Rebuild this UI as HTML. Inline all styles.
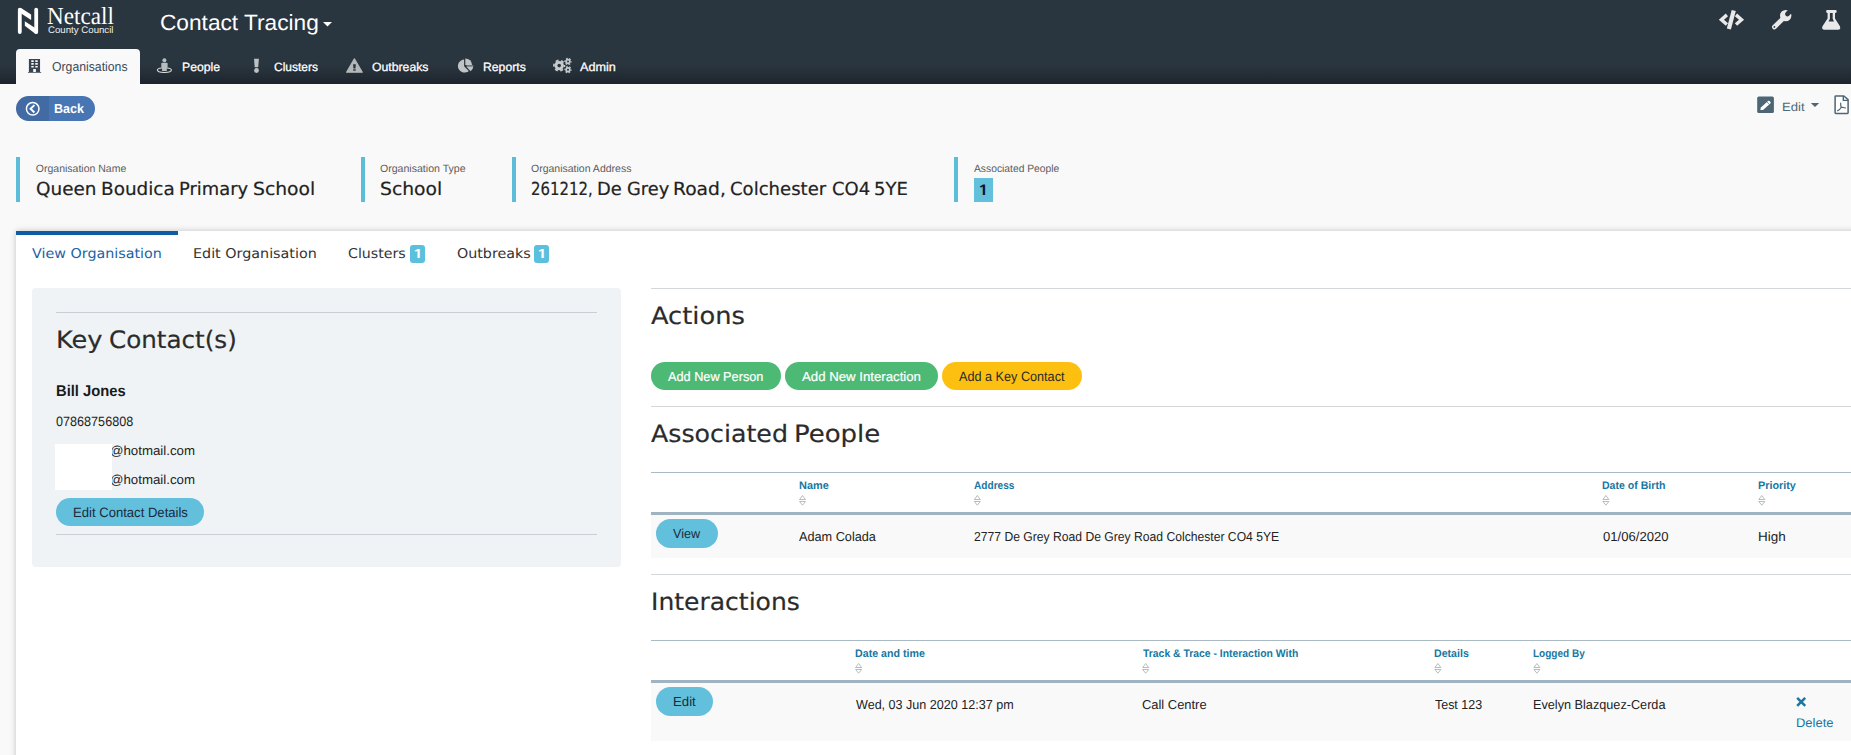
<!DOCTYPE html>
<html lang="en"><head><meta charset="utf-8"><title>Contact Tracing - Organisation</title>
<style>
html,body{margin:0;padding:0}
body{width:1851px;height:755px;overflow:hidden;position:relative;background:#f9f9f9;font-family:"Liberation Sans",sans-serif;color:#222}
.a{position:absolute;display:block}
.t{position:absolute;white-space:nowrap;transform-origin:0 0;display:block;text-rendering:geometricPrecision;line-height:normal}
.gp{text-rendering:geometricPrecision}
.hs{-webkit-text-stroke:.2px currentColor}
.w{-webkit-text-stroke:.2px #fff}
.nav{-webkit-text-stroke:.3px #fff;text-shadow:0 0 2px rgba(0,0,0,.55)}
#hdr{left:0;top:0;width:1851px;height:84px;background:linear-gradient(#2a363f 0,#2a363f 64px,#252e37 74px,#1d232c 84px)}
#navtab{left:16px;top:49px;width:124px;height:36px;background:#f9f9f9;border-radius:4px 4px 0 0}
#back{left:16px;top:96px;width:79px;height:25px;border-radius:13px;background:linear-gradient(90deg,#426aa3 0,#426aa3 32.8px,#4876b4 32.8px)}
.bar{width:4px;height:45px;top:157px;background:#5bbdd9}
#panel{left:16px;top:231px;width:1850px;height:540px;background:#fff;box-shadow:0 0 6px rgba(0,0,0,.22)}
#tabbar{left:16px;top:231px;width:162px;height:4px;background:#0d5ca6}
.badge{background:#5bc0de;border-radius:3px;width:15px;height:17.5px;top:245px}
#kc{left:32px;top:288px;width:589px;height:279px;background:#eff3f6;border-radius:4px}
.hr{height:1px;background:#d3d7da}
.btn{border-radius:15px;height:28px}
.th{height:1px;background:#a9bac4;left:651px;width:1200px}
.tb{height:3px;background:#9fb3c0;left:651px;width:1200px}
.row{left:651px;width:1200px;background:#f9f9f9}
svg{position:absolute;overflow:visible}
</style></head><body>
<div class="a" id="hdr"></div>
<div class="a" id="navtab"></div>
<div class="a" id="back"></div>
<div class="a bar" style="left:16px"></div><div class="a bar" style="left:361px"></div><div class="a bar" style="left:512px"></div><div class="a bar" style="left:954px"></div>
<div class="a" style="left:974px;top:178px;width:19px;height:24px;background:#62c0dd"></div>
<div class="a" id="panel"></div>
<div class="a" id="tabbar"></div>
<div class="a badge" style="left:410px"></div><div class="a badge" style="left:534px"></div>
<div class="a" id="kc"></div>
<div class="a hr" style="left:56px;top:312px;width:541px;background:#c9d0d5"></div>
<div class="a hr" style="left:56px;top:534px;width:541px;background:#c9d0d5"></div>
<div class="a btn" style="left:56px;top:498px;width:148px;background:#62c0dd"></div>
<div class="a hr" style="left:651px;top:288px;width:1200px"></div>
<div class="a btn" style="left:651px;top:362px;width:130px;background:#4cb974"></div>
<div class="a btn" style="left:785px;top:362px;width:153px;background:#4cb974"></div>
<div class="a btn" style="left:942px;top:362px;width:140px;background:#fdc010"></div>
<div class="a hr" style="left:651px;top:406px;width:1200px"></div>
<div class="a th" style="top:472px"></div>
<div class="a tb" style="top:512px"></div>
<div class="a row" style="top:515px;height:43px"></div>
<div class="a btn" style="left:656px;top:519px;width:62px;height:28.5px;background:#62c0dd"></div>
<div class="a hr" style="left:651px;top:574px;width:1200px"></div>
<div class="a th" style="top:640px"></div>
<div class="a tb" style="top:680px"></div>
<div class="a row" style="top:683px;height:58px"></div>
<div class="a btn" style="left:656px;top:687px;width:57px;height:28.5px;background:#62c0dd"></div>
<svg class="a" style="left:0;top:0" width="1851" height="755" viewBox="0 0 1851 755">
<!-- logo N -->
<g fill="#fff">
<rect x="17.9" y="7.8" width="3.8" height="26.1" rx="1.9"/>
<path d="M18.4 10 L18.8 8.2 L21 7.9 L31.1 14.6 V20 L21.6 13.7 Z"/>
<rect x="34.3" y="7.8" width="3.8" height="26.1" rx="1.9"/>
<path d="M24.8 21.3 L34.4 27.6 L37.8 30.5 L37.6 33.3 L35.3 33.8 L24.8 25.8 Z"/>
</g>
<!-- title caret -->
<path d="M323 22.1 h9 l-4.5 4.5 z" fill="#fff"/>
<!-- building -->
<path fill="#3a4450" fill-rule="evenodd" d="M28.9 58.9 H40.05 V71.9 H41.2 V72.7 H28 V71.9 H28.9 Z M31.3 60.3 h2.4 v1.6 h-2.4z M35.3 60.3 h2.4 v1.6 h-2.4z M31.3 63.1 h2.4 v1.6 h-2.4z M35.3 63.1 h2.4 v1.6 h-2.4z M31.3 66 h2.4 v1.6 h-2.4z M35.3 66 h2.4 v1.6 h-2.4z M33.2 69 h2.7 v2.9 h-2.7z"/>
<!-- street view -->
<ellipse cx="164.4" cy="70.1" rx="7" ry="2.4" fill="none" stroke="#dfe1e3" stroke-width="1.1"/>
<g fill="#b9bec1">
<circle cx="164.4" cy="60.3" r="2"/>
<path d="M161.3 63.6 Q161.3 62.8 162.1 62.8 H166.7 Q167.6 62.8 167.6 63.6 V67.3 H166.8 V70.9 H162.1 V67.3 H161.3 Z"/>
</g>
<!-- exclamation -->
<g fill="#bcc0c3">
<path d="M254 58.8 H258.9 L258.2 67.3 H254.7 Z"/>
<circle cx="256.5" cy="70.5" r="2.4"/>
</g>
<!-- triangle -->
<path d="M354.4 58.9 L362.3 72.2 H346.6 Z" fill="#b3b7ba" stroke="#b3b7ba" stroke-width="1.2" stroke-linejoin="round"/>
<path d="M353.1 64.2 h2.7 l-.3 4.4 h-2.1z M353.3 69.3 h2.3 v1.5 h-2.3z" fill="#2a333c"/>
<!-- pie -->
<g fill="#c0c4c7">
<path d="M464.1 66.2 V59.6 A6.5 6.5 0 1 0 468.8 70.9 Z"/>
<path d="M465.3 64.9 V58.4 A6.7 6.7 0 0 1 472.1 64.9 Z"/>
<path d="M466.2 66.4 H473.3 A6.6 6.6 0 0 1 470.6 71.2 Z"/>
<path d="M466.2 65.2 H473.2 L473.3 66.7 H467.6 Z" fill="#8e9397"/>
</g>
<!-- cogs -->
<g fill="#c8cbce">
<circle cx="559.2" cy="65.6" r="4.7"/>
<circle cx="559.2" cy="65.6" r="5.3" fill="none" stroke="#c8cbce" stroke-width="1.6" stroke-dasharray="2.9 2.65" stroke-dashoffset="1.45"/>
<circle cx="559.2" cy="65.6" r="1.8" fill="#29333c"/>
<circle cx="568" cy="61.5" r="2.7"/>
<circle cx="568" cy="61.5" r="3.1" fill="none" stroke="#c8cbce" stroke-width="1.1" stroke-dasharray="1.7 1.55" stroke-dashoffset=".8"/>
<circle cx="568" cy="61.5" r="1" fill="#29343d"/>
<circle cx="568" cy="69.7" r="2.7"/>
<circle cx="568" cy="69.7" r="3.1" fill="none" stroke="#c8cbce" stroke-width="1.1" stroke-dasharray="1.7 1.55" stroke-dashoffset=".8"/>
<circle cx="568" cy="69.7" r="1" fill="#262f38"/>
</g>
<!-- code -->
<g fill="none" stroke="#e9e9e9" stroke-width="3.4" stroke-linejoin="miter">
<path d="M1726.9 14.9 L1721.4 19.7 L1726.9 24.6"/>
<path d="M1736 14.9 L1741.5 19.7 L1736 24.6"/>
</g>
<path d="M1731.7 10.1 L1735.8 11 L1730.9 29.6 L1726.8 28.6 Z" fill="#e9e9e9"/>
<!-- wrench -->
<g>
<path d="M1774.4 27 L1784 17.6" stroke="#e9e9e9" stroke-width="4.7" stroke-linecap="round" fill="none"/>
<circle cx="1785.7" cy="15.6" r="5.7" fill="#e9e9e9"/>
<path d="M1787.4 14 L1794 7.4" stroke="#2a363f" stroke-width="4.6" stroke-linecap="round" fill="none"/>
<circle cx="1774.4" cy="26.9" r=".9" fill="#2a363f"/>
</g>
<!-- flask -->
<g>
<path fill="#e9e9e9" d="M1827.4 10.1 H1835.4 Q1836.7 10.1 1836.7 11.5 Q1836.7 12.9 1835.4 12.9 H1835 V18.4 L1839.9 26.3 Q1841.2 29.7 1838 29.7 H1824.4 Q1821.2 29.7 1822.5 26.3 L1827.6 18.4 V12.9 H1827.4 Q1826.1 12.9 1826.1 11.5 Q1826.1 10.1 1827.4 10.1 Z"/>
<path fill="#2a363f" d="M1829.9 12.9 H1832.7 V18.8 L1834 21.6 H1828.6 L1829.9 18.8 Z"/>
</g>
<!-- back circle -->
<circle cx="32.7" cy="108.8" r="6.3" fill="none" stroke="#fff" stroke-width="1.5"/>
<path d="M34.4 105.1 L30.6 108.8 L34.4 112.5" fill="none" stroke="#fff" stroke-width="2"/>
<!-- edit square -->
<rect x="1757.2" y="96.6" width="16.7" height="16.4" rx="1.6" fill="#4d6675"/>
<path d="M1760.3 110 L1760.9 107.6 L1768 101 Q1768.8 100.4 1769.6 101.1 L1770.4 102 Q1771 102.8 1770.3 103.5 L1763 110 Z" fill="#fff"/>
<path d="M1766.8 101.7 L1769.4 104.6" stroke="#4d6675" stroke-width=".7"/>
<!-- edit caret -->
<path d="M1810.8 103 h8.4 l-4.2 4 z" fill="#4d6675"/>
<!-- pdf -->
<path d="M1835.1 96.6 Q1835.1 95.95 1835.8 95.95 H1843.9 L1848.1 99.6 V112.8 Q1848.1 113.45 1847.4 113.45 H1835.8 Q1835.1 113.45 1835.1 112.8 Z" fill="#fff" stroke="#4d6675" stroke-width="1.5" stroke-linejoin="round"/>
<path d="M1843.3 96 V100.4 H1848" fill="none" stroke="#4d6675" stroke-width="1.4"/>
<path d="M1840.7 103.2 Q1840.5 105.9 1841.3 107.2 Q1839.8 109.7 1837.6 110.8 M1841.3 107.2 Q1843.5 107.6 1845.6 108" fill="none" stroke="#4d6675" stroke-width="1.2" stroke-linecap="round"/>
<!-- sort icons -->
<g fill="none" stroke="#adb5bb" stroke-width=".9" stroke-linejoin="round">
<path transform="translate(799 495)" d="M3.5 .5 L6.5 4.5 H.5 Z M.5 6.5 H6.5 L3.5 10.2 Z"/>
<path transform="translate(973.8 495)" d="M3.5 .5 L6.5 4.5 H.5 Z M.5 6.5 H6.5 L3.5 10.2 Z"/>
<path transform="translate(1602.4 495)" d="M3.5 .5 L6.5 4.5 H.5 Z M.5 6.5 H6.5 L3.5 10.2 Z"/>
<path transform="translate(1758.3 495)" d="M3.5 .5 L6.5 4.5 H.5 Z M.5 6.5 H6.5 L3.5 10.2 Z"/>
<path transform="translate(855.1 663)" d="M3.5 .5 L6.5 4.5 H.5 Z M.5 6.5 H6.5 L3.5 10.2 Z"/>
<path transform="translate(1142.2 663)" d="M3.5 .5 L6.5 4.5 H.5 Z M.5 6.5 H6.5 L3.5 10.2 Z"/>
<path transform="translate(1434.4 663)" d="M3.5 .5 L6.5 4.5 H.5 Z M.5 6.5 H6.5 L3.5 10.2 Z"/>
<path transform="translate(1533.4 663)" d="M3.5 .5 L6.5 4.5 H.5 Z M.5 6.5 H6.5 L3.5 10.2 Z"/>
</g>
<!-- delete x -->
<path d="M1797.2 697.8 L1805.2 705.8 M1805.2 697.8 L1797.2 705.8" stroke="#1877a2" stroke-width="2.5" fill="none"/>
</svg>

<span class="t gp" style="left:47.39px;top:3.00px;font-size:24.5px;font-family:'Liberation Serif', serif;color:#fff;transform:scaleX(0.9453)">Netcall</span>
<span class="t" style="left:47.69px;top:25.00px;font-size:9.5px;color:#eee;transform:scaleX(1.0166)">County Council</span>
<span class="t" style="left:159.77px;top:10.00px;font-size:22px;color:#fff;transform:scaleX(1.0304)">Contact Tracing</span>
<span class="t" style="left:51.73px;top:59.00px;font-size:13px;color:#3b4a57;transform:scaleX(0.9413)">Organisations</span>
<span class="t nav" style="left:181.78px;top:60.00px;font-size:12px;color:#fff;transform:scaleX(1.0210)">People</span>
<span class="t nav" style="left:273.80px;top:60.00px;font-size:12px;color:#fff;transform:scaleX(0.9977)">Clusters</span>
<span class="t nav" style="left:372.09px;top:60.00px;font-size:12px;color:#fff;transform:scaleX(1.0202)">Outbreaks</span>
<span class="t nav" style="left:482.68px;top:60.00px;font-size:12px;color:#fff;transform:scaleX(1.0173)">Reports</span>
<span class="t nav" style="left:580.00px;top:60.00px;font-size:12px;color:#fff;transform:scaleX(1.0526)">Admin</span>
<span class="t" style="left:53.58px;top:101.00px;font-size:13px;font-weight:700;color:#fff;transform:scaleX(0.9653)">Back</span>
<span class="t" style="left:1781.81px;top:100.00px;font-size:12px;color:#4d6878;transform:scaleX(1.0937)">Edit</span>
<span class="t" style="left:35.80px;top:163.00px;font-size:10.5px;color:#5c5c5c;transform:scaleX(1.0000)">Organisation Name</span>
<span class="t" style="left:380.30px;top:163.00px;font-size:10.5px;color:#5c5c5c;transform:scaleX(1.0060)">Organisation Type</span>
<span class="t" style="left:531.00px;top:163.00px;font-size:10.5px;color:#5c5c5c;transform:scaleX(1.0000)">Organisation Address</span>
<span class="t" style="left:973.60px;top:163.00px;font-size:10.5px;color:#5c5c5c;transform:scaleX(0.9803)">Associated People</span>
<span class="t hs" style="left:35.78px;top:179.00px;font-size:18px;font-family:'DejaVu Sans', 'Liberation Sans', sans-serif;color:#222;transform:scaleX(1.0220)">Queen</span>
<span class="t hs" style="left:100.61px;top:179.00px;font-size:18px;font-family:'DejaVu Sans', 'Liberation Sans', sans-serif;color:#222;transform:scaleX(1.0225)">Boudica</span>
<span class="t hs" style="left:178.66px;top:179.00px;font-size:18px;font-family:'DejaVu Sans', 'Liberation Sans', sans-serif;color:#222;transform:scaleX(0.9933)">Primary</span>
<span class="t hs" style="left:253.30px;top:179.00px;font-size:18px;font-family:'DejaVu Sans', 'Liberation Sans', sans-serif;color:#222;transform:scaleX(1.0396)">School</span>
<span class="t hs" style="left:380.20px;top:179.00px;font-size:18px;font-family:'DejaVu Sans', 'Liberation Sans', sans-serif;color:#222;transform:scaleX(1.0396)">School</span>
<span class="t hs" style="left:531.27px;top:179.00px;font-size:18px;font-family:'DejaVu Sans', 'Liberation Sans', sans-serif;color:#222;transform:scaleX(0.8280)">261212,</span>
<span class="t hs" style="left:597.06px;top:179.00px;font-size:18px;font-family:'DejaVu Sans', 'Liberation Sans', sans-serif;color:#222;transform:scaleX(0.9933)">De</span>
<span class="t hs" style="left:626.71px;top:179.00px;font-size:18px;font-family:'DejaVu Sans', 'Liberation Sans', sans-serif;color:#222;transform:scaleX(0.9878)">Grey</span>
<span class="t hs" style="left:673.28px;top:179.00px;font-size:18px;font-family:'DejaVu Sans', 'Liberation Sans', sans-serif;color:#222;transform:scaleX(1.0379)">Road,</span>
<span class="t hs" style="left:730.10px;top:179.00px;font-size:18px;font-family:'DejaVu Sans', 'Liberation Sans', sans-serif;color:#222;transform:scaleX(1.0032)">Colchester</span>
<span class="t hs" style="left:831.90px;top:179.00px;font-size:18px;font-family:'DejaVu Sans', 'Liberation Sans', sans-serif;color:#222;transform:scaleX(0.9986)">CO4</span>
<span class="t hs" style="left:874.10px;top:179.00px;font-size:18px;font-family:'DejaVu Sans', 'Liberation Sans', sans-serif;color:#222;transform:scaleX(1.0016)">5YE</span>
<span class="t" style="left:977.35px;top:184.00px;font-size:14px;font-family:'NanumGothic', 'Liberation Sans', sans-serif;font-weight:700;color:#0e1433;transform:scaleX(1.5143)">1</span>
<span class="t" style="left:31.94px;top:246.00px;font-size:13.5px;font-family:'DejaVu Sans', 'Liberation Sans', sans-serif;color:#1c62a5;transform:scaleX(1.0598)">View Organisation</span>
<span class="t" style="left:193.07px;top:246.00px;font-size:13.5px;font-family:'DejaVu Sans', 'Liberation Sans', sans-serif;color:#333;transform:scaleX(1.0608)">Edit Organisation</span>
<span class="t" style="left:348.21px;top:246.00px;font-size:13.5px;font-family:'DejaVu Sans', 'Liberation Sans', sans-serif;color:#333;transform:scaleX(1.0505)">Clusters</span>
<span class="t" style="left:412.20px;top:248.00px;font-size:12px;font-family:'NanumGothic', 'Liberation Sans', sans-serif;font-weight:700;color:#fff;transform:scaleX(1.6667)">1</span>
<span class="t" style="left:456.61px;top:246.00px;font-size:13.5px;font-family:'DejaVu Sans', 'Liberation Sans', sans-serif;color:#333;transform:scaleX(1.0564)">Outbreaks</span>
<span class="t" style="left:536.20px;top:248.00px;font-size:12px;font-family:'NanumGothic', 'Liberation Sans', sans-serif;font-weight:700;color:#fff;transform:scaleX(1.6667)">1</span>
<span class="t hs" style="left:55.59px;top:326.00px;font-size:24px;font-family:'DejaVu Sans', 'Liberation Sans', sans-serif;color:#2b2b2b;transform:scaleX(1.0691)">Key</span>
<span class="t hs" style="left:108.72px;top:326.00px;font-size:24px;font-family:'DejaVu Sans', 'Liberation Sans', sans-serif;color:#2b2b2b;transform:scaleX(1.0252)">Contact(s)</span>
<span class="t" style="left:56.25px;top:383.00px;font-size:15.5px;font-weight:700;color:#1a1a1a;transform:scaleX(0.9524)">Bill Jones</span>
<span class="t" style="left:55.63px;top:414.00px;font-size:13.5px;color:#222;transform:scaleX(0.9350)">07868756808</span>
<span class="t" style="left:110.38px;top:443.00px;font-size:13px;color:#222;transform:scaleX(1.0209)">@hotmail.com</span>
<span class="t" style="left:110.38px;top:472.00px;font-size:13px;color:#222;transform:scaleX(1.0209)">@hotmail.com</span>
<span class="t" style="left:72.63px;top:505.00px;font-size:13.5px;color:#1b2a3a;transform:scaleX(0.9692)">Edit Contact Details</span>
<span class="t hs" style="left:651.43px;top:302.00px;font-size:24px;font-family:'DejaVu Sans', 'Liberation Sans', sans-serif;color:#2b2b2b;transform:scaleX(1.0701)">Actions</span>
<span class="t w" style="left:668.40px;top:369.00px;font-size:13px;color:#fff;transform:scaleX(0.9778)">Add New Person</span>
<span class="t w" style="left:802.00px;top:369.00px;font-size:13px;color:#fff;transform:scaleX(1.0159)">Add New Interaction</span>
<span class="t" style="left:958.60px;top:369.00px;font-size:13.5px;color:#2a2a2a;transform:scaleX(0.9369)">Add a Key Contact</span>
<span class="t hs" style="left:651.34px;top:420.00px;font-size:24px;font-family:'DejaVu Sans', 'Liberation Sans', sans-serif;color:#2b2b2b;transform:scaleX(1.0528)">Associated</span>
<span class="t hs" style="left:794.47px;top:420.00px;font-size:24px;font-family:'DejaVu Sans', 'Liberation Sans', sans-serif;color:#2b2b2b;transform:scaleX(1.0820)">People</span>
<span class="t" style="left:798.95px;top:480.00px;font-size:11px;font-weight:700;color:#1877a2;transform:scaleX(0.9948)">Name</span>
<span class="t" style="left:974.27px;top:480.00px;font-size:11px;font-weight:700;color:#1877a2;transform:scaleX(0.9179)">Address</span>
<span class="t" style="left:1602.28px;top:480.00px;font-size:11px;font-weight:700;color:#1877a2;transform:scaleX(0.9597)">Date of Birth</span>
<span class="t" style="left:1758.06px;top:480.00px;font-size:11px;font-weight:700;color:#1877a2;transform:scaleX(0.9828)">Priority</span>
<span class="t" style="left:673.26px;top:526.00px;font-size:13px;color:#1b2a3a;transform:scaleX(0.9694)">View</span>
<span class="t" style="left:798.90px;top:529.00px;font-size:13px;color:#222;transform:scaleX(0.9765)">Adam Colada</span>
<span class="t" style="left:973.70px;top:529.00px;font-size:13px;color:#222;transform:scaleX(0.9344)">2777 De Grey Road De Grey Road Colchester CO4 5YE</span>
<span class="t" style="left:1602.50px;top:529.00px;font-size:13px;color:#222;transform:scaleX(1.0078)">01/06/2020</span>
<span class="t" style="left:1758.16px;top:529.00px;font-size:13px;color:#222;transform:scaleX(1.0360)">High</span>
<span class="t hs" style="left:650.75px;top:588.00px;font-size:24px;font-family:'DejaVu Sans', 'Liberation Sans', sans-serif;color:#2b2b2b;transform:scaleX(1.0427)">Interactions</span>
<span class="t" style="left:855.37px;top:648.00px;font-size:11px;font-weight:700;color:#1877a2;transform:scaleX(0.9690)">Date and time</span>
<span class="t" style="left:1142.90px;top:648.00px;font-size:11px;font-weight:700;color:#1877a2;transform:scaleX(0.9447)">Track &amp; Trace - Interaction With</span>
<span class="t" style="left:1434.28px;top:648.00px;font-size:11px;font-weight:700;color:#1877a2;transform:scaleX(0.9657)">Details</span>
<span class="t" style="left:1533.42px;top:648.00px;font-size:11px;font-weight:700;color:#1877a2;transform:scaleX(0.9107)">Logged By</span>
<span class="t" style="left:673.08px;top:694.00px;font-size:13px;color:#1b2a3a;transform:scaleX(1.0165)">Edit</span>
<span class="t" style="left:855.60px;top:697.00px;font-size:13px;color:#222;transform:scaleX(0.9670)">Wed, 03 Jun 2020 12:37 pm</span>
<span class="t" style="left:1141.96px;top:697.00px;font-size:13px;color:#222;transform:scaleX(0.9929)">Call Centre</span>
<span class="t" style="left:1434.96px;top:697.00px;font-size:13px;color:#222;transform:scaleX(0.9575)">Test 123</span>
<span class="t" style="left:1533.12px;top:697.00px;font-size:13px;color:#222;transform:scaleX(0.9751)">Evelyn Blazquez-Cerda</span>
<span class="t" style="left:1796.26px;top:716.00px;font-size:12.5px;color:#1877a2;transform:scaleX(1.0377)">Delete</span>
<div class="a" style="left:55px;top:444px;width:57px;height:46px;background:#fff"></div>
</body></html>
